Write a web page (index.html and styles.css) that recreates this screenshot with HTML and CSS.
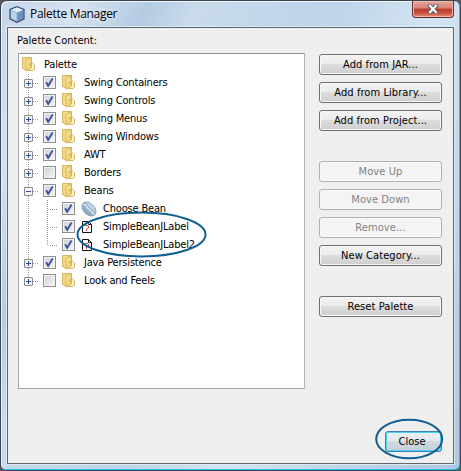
FILE: index.html
```
<!DOCTYPE html>
<html lang="en">
<head>
<meta charset="utf-8">
<title>Palette Manager</title>
<link rel="stylesheet" href="styles.css">
</head>
<body>
<svg class="defs" width="0" height="0" aria-hidden="true">
  <defs>
    <linearGradient id="gold" x1="0" y1="0" x2="1" y2="1"><stop offset="0" stop-color="#fbe8a0"/><stop offset="1" stop-color="#ecc968"/></linearGradient>
    <linearGradient id="bean" x1="0" y1="0" x2="0" y2="1"><stop offset="0" stop-color="#d3e2ee"/><stop offset="1" stop-color="#7d9fbd"/></linearGradient>
    <symbol id="folder" viewBox="0 0 16 16">
      <path d="M10.500 6.500c1.500 0 1.500 2 3 2.500v4L12 14.500H7.500z" fill="#fff3cc" stroke="#d0ac52" stroke-width=".9"/>
      <path d="M1.500 1.500h9v9.500l-5 3.500-4-2z" fill="#f3d988" stroke="#cdaa52" stroke-width=".8"/>
      <path d="M4.800 4L10.500 2v10L5.200 15z" fill="url(#gold)" stroke="#cda84c" stroke-width=".7"/>
      <path d="M9 7.500v1.800" stroke="#a97e2b" stroke-width=".8"/>
    </symbol>
    <symbol id="check" viewBox="0 0 13 13"><path d="M3.200 6.200l2 3.600L9.600 2.600" fill="none" stroke="#3c539b" stroke-width="1.900"/></symbol>
    <symbol id="doc" viewBox="0 0 12 12">
      <path d="M1.500 .5H7.500L10.500 3.500V11.500H1.500z" fill="#fff" stroke="#111"/>
      <path d="M7.500 .5V3.500H10.500" fill="none" stroke="#111"/>
      <path d="M4 4.500H7M7.500 5v2M6.500 7v1M5.500 8v2" fill="none" stroke="#e0403a"/>
    </symbol>
  </defs>
</svg>
<div class="window">
  <header class="titlebar">
    <svg class="cube" width="16" height="17" viewBox="0 0 16 17">
      <path d="M8 .7l7 2.700v9.400L8 16.300 1 12.800V3.400z" fill="#88aed0" stroke="#3a4670" stroke-width="1.200"/>
      <path d="M8 1.500l6 2.200L8 6.200 2 3.700z" fill="#e3f1f7"/>
      <path d="M2 4.500l5.500 2.200v8.500L2 12.200z" fill="#b5d6e6"/>
      <path d="M8.500 6.700L14 4.500v7.700l-5.500 3z" fill="#6f8fbc"/>
    </svg>
    <span class="title">Palette Manager</span>
    <span class="x"><svg width="12" height="10" viewBox="0 0 12 10"><path d="M3 1.800L9 8.200M9 1.800L3 8.200" stroke="#535666" stroke-width="4" stroke-linecap="square"/><path d="M3 1.800L9 8.200M9 1.800L3 8.200" stroke="#fff" stroke-width="2.200" stroke-linecap="square"/></svg></span>
  </header>
  <main class="panel">
    <section class="left">
      <div class="caption">Palette Content:</div>
      <ul class="tree">
        <li class="row root"><svg class="folder"><use href="#folder"/></svg><span>Palette</span></li>
        <li class="row"><i class="exp plus"></i><i class="dots"></i><i class="box"><svg><use href="#check"/></svg></i><svg class="folder"><use href="#folder"/></svg><span>Swing Containers</span></li>
        <li class="row"><i class="exp plus"></i><i class="dots"></i><i class="box"><svg><use href="#check"/></svg></i><svg class="folder"><use href="#folder"/></svg><span>Swing Controls</span></li>
        <li class="row"><i class="exp plus"></i><i class="dots"></i><i class="box"><svg><use href="#check"/></svg></i><svg class="folder"><use href="#folder"/></svg><span>Swing Menus</span></li>
        <li class="row"><i class="exp plus"></i><i class="dots"></i><i class="box"><svg><use href="#check"/></svg></i><svg class="folder"><use href="#folder"/></svg><span>Swing Windows</span></li>
        <li class="row"><i class="exp plus"></i><i class="dots"></i><i class="box"><svg><use href="#check"/></svg></i><svg class="folder"><use href="#folder"/></svg><span>AWT</span></li>
        <li class="row"><i class="exp plus"></i><i class="dots"></i><i class="box"></i><svg class="folder"><use href="#folder"/></svg><span>Borders</span></li>
        <li class="row"><i class="exp"></i><i class="dots"></i><i class="box"><svg><use href="#check"/></svg></i><svg class="folder"><use href="#folder"/></svg><span>Beans</span></li>
        <li class="row child"><i class="stem"></i><i class="dots"></i><i class="box"><svg><use href="#check"/></svg></i><svg class="bean" viewBox="0 0 16 16"><ellipse cx="8" cy="8" rx="8.200" ry="5.500" transform="rotate(45 8 8)" fill="url(#bean)" stroke="#7e94a8" stroke-width=".8"/><path d="M2.500 3c4 0 3 4 5.500 5s2 4 5.500 5" fill="none" stroke="#f3f8fb" stroke-width="1.200"/><path d="M3 2.400c4 0 3 4 5.500 5s2 4 5.200 5" fill="none" stroke="#7191ac" stroke-width=".7"/></svg><span>Choose Bean</span></li>
        <li class="row child"><i class="stem"></i><i class="dots"></i><i class="box"><svg><use href="#check"/></svg></i><svg class="doc"><use href="#doc"/></svg><span>SimpleBeanJLabel</span></li>
        <li class="row child"><i class="stem end"></i><i class="dots"></i><i class="box"><svg><use href="#check"/></svg></i><svg class="doc"><use href="#doc"/></svg><span>SimpleBeanJLabel2</span></li>
        <li class="row"><i class="exp plus"></i><i class="dots"></i><i class="box"><svg><use href="#check"/></svg></i><svg class="folder"><use href="#folder"/></svg><span>Java Persistence</span></li>
        <li class="row last"><i class="exp plus"></i><i class="dots"></i><i class="box"></i><svg class="folder"><use href="#folder"/></svg><span>Look and Feels</span></li>
      </ul>
    </section>
    <section class="right">
      <div class="group"><button>Add from JAR...</button><button>Add from Library...</button><button>Add from Project...</button></div>
      <div class="group"><button disabled>Move Up</button><button disabled>Move Down</button><button disabled>Remove...</button><button>New Category...</button></div>
      <div class="group"><button>Reset Palette</button></div>
      <button class="close">Close</button>
    </section>
  </main>
</div>
<svg class="marks" width="461" height="471" fill="none" stroke="#0f5f93" stroke-width="2">
  <ellipse cx="141.500" cy="234.500" rx="64" ry="22"/>
  <ellipse cx="409.200" cy="439" rx="33" ry="19.300"/>
</svg>
</body>
</html>
```
FILE: styles.css
```
* { box-sizing: border-box; }
body { margin: 0; background: #55575c; font: 11px/18px "DejaVu Sans Condensed", "DejaVu Sans", sans-serif; font-stretch: condensed; color: #000; overflow: hidden; }
.defs { position: absolute; }
.window {
  width: 461px; height: 471px; padding: 0 6px 7px 6px;
  border: 1px solid #3c4450;
  border-radius: 7px 7px 6px 6px;
  background: linear-gradient(115deg, #c6d6e9 0, #d3e1f0 12%, #b4cbe3 22%, #c9daec 29%, #bed4ea 50%, #d5e4f2 65%, #adc6e2 100%);
  box-shadow: inset -1px -1px #25c4ec, inset 1px 1px #edf5fb;
}
.titlebar { height: 26px; display: flex; align-items: flex-start; padding-left: 2px; }
.cube { margin-top: 5px; }
.title { margin: 4px 0 0 5px; font: 12px/18px "Open Sans", sans-serif; letter-spacing: -.3px; text-shadow: 0 0 6px #fff; }
.x {
  margin-left: auto; width: 42px; height: 17px; display: flex; align-items: center; justify-content: center;
  border: 1px solid #642e30; border-top: 0; border-radius: 0 0 4px 4px;
  background: linear-gradient(#e6a99d, #d58172 45%, #b9392a 50%, #c9513e 75%, #e28f77);
  box-shadow: inset 0 0 0 1px #efb7aa;
}
.panel { display: flex; height: 437px; width: 447px; border: 1px solid #5d6671; background: #efefef; box-shadow: 0 0 0 1px #dceaf6; }
.left { margin-left: 10px; width: 287px; }
.caption { height: 25px; padding-top: 4px; margin-left: -1px; }
.tree { list-style: none; margin: 0; padding: 2px 0 0 3px; height: 336px; border: 1px solid #999da2; border-color: #8e9296 #b4b6b8 #a1a3a5 #a1a3a5; background: #fff; }
.row { display: flex; align-items: center; height: 18px; padding-left: 2px; background: repeating-linear-gradient(#999 0 1px, transparent 1px 2px) 6px 0 / 1px 18px no-repeat; white-space: nowrap; }
.row.root { padding-left: 0; background: none; }
.row.last { background-size: 1px 9px; }
.row i { display: block; flex: none; }
.row span { margin-left: 7px; letter-spacing: -.18px; }
.exp { width: 9px; height: 9px; margin-top: 1px; border: 1px solid #8b8b8b; border-radius: 1px; background: linear-gradient(#36519a, #36519a) center / 5px 1px no-repeat, #f2f2f2; }
.plus { background: linear-gradient(#36519a, #36519a) center / 5px 1px no-repeat, linear-gradient(#36519a, #36519a) center / 1px 5px no-repeat, #f2f2f2; }
.dots { width: 6px; height: 1px; margin: 1px 4px 0 0; background: repeating-linear-gradient(90deg, #999 0 1px, transparent 1px 2px); }
.box { width: 13px; height: 13px; margin-bottom: 1px; border: 1px solid #8e8f8f; background: linear-gradient(135deg, #cdd1d7, #f7f7f7); box-shadow: inset 0 0 0 1px #f4f4f4; }
.box svg { display: block; width: 13px; height: 13px; margin: -1px; }
.folder { width: 16px; height: 16px; margin-left: 5px; margin-bottom: 2px; flex: none; }
.root .folder { margin-left: -1px; }
.child .stem { width: 1px; height: 18px; margin-left: 23px; margin-right: 2px; background: repeating-linear-gradient(#999 0 1px, transparent 1px 2px); }
.child .stem.end { height: 10px; align-self: flex-start; }
.child .dots { width: 8px; }
.bean { width: 16px; height: 16px; margin-left: 6px; }
.doc { width: 12px; height: 12px; margin: 0 4px 0 6px; }
.child .doc + span { margin-left: 6px; }
.child .bean + span { margin-left: 6px; }
.right { display: flex; flex-direction: column; margin: 26px 0 0 14px; width: 123px; height: 399px; }
.group { display: flex; flex-direction: column; gap: 7px; margin-bottom: 30px; }
button { height: 21px; margin: 0; padding: 0; font: inherit; line-height: 18px; letter-spacing: .08px; color: #000; border: 1px solid #707070; border-radius: 3px; background: linear-gradient(#f3f3f3, #ebebeb 48%, #dddddd 50%, #cfcfcf); box-shadow: inset 0 0 0 1px #f8f8f8; }
button:disabled { color: #838383; border-color: #adb2b5; background: #f4f4f4; }
.close { width: 57px; margin: auto 0 1px auto; padding-right: 3px; letter-spacing: 0; border-color: #3c7fb1; background: linear-gradient(#edf0f2, #e1e7eb 48%, #d0dae0 50%, #c5cfd5); box-shadow: inset 0 0 0 1px #48d2f5; }
.marks { position: absolute; left: 0; top: 0; pointer-events: none; }
```
